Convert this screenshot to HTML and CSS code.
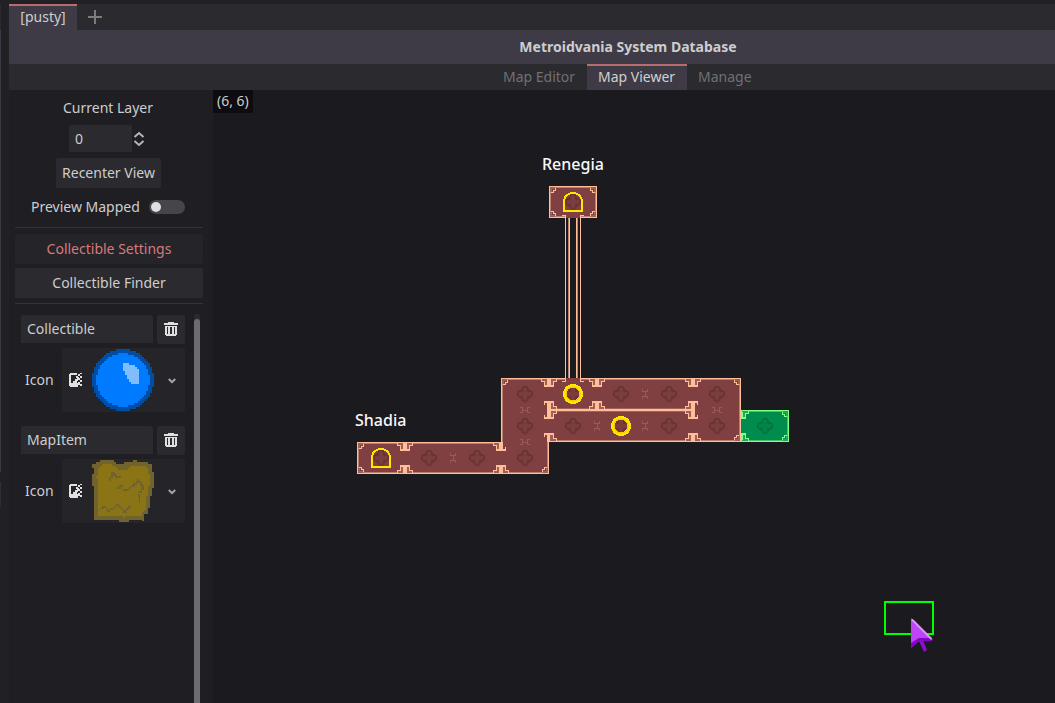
FILE: index.html
```html
<!DOCTYPE html>
<html lang="en">
<head>
<meta charset="utf-8">
<title>Metroidvania System Database</title>
<link rel="stylesheet" href="styles.css">
</head>
<body>
<div class="edge"><i class="edge-tab"></i><i class="edge-line"></i><i class="edge-line low"></i></div>
<div class="app">
  <div class="scene-tabs">
    <div class="scene-tab">[pusty]</div>
    <svg class="plus" width="14" height="14" viewBox="0 0 14 14"><path d="M7 0V14M0 7H14"/></svg>
  </div>
  <header class="title">Metroidvania System Database</header>
  <nav class="tabs">
    <span class="tab">Map Editor</span><span class="tab active">Map Viewer</span><span class="tab">Manage</span>
  </nav>
  <div class="main">
    <aside class="side">
      <div class="layer-label">Current Layer</div>
      <div class="spin"><div class="field number">0</div>
        <svg width="12" height="16" viewBox="0 0 12 16"><path d="M1.500 6L6 2L10.500 6M1.500 10L6 14L10.500 10"/></svg>
      </div>
      <div class="btn recenter">Recenter View</div>
      <div class="preview"><span>Preview Mapped</span><span class="toggle"></span></div>
      <div class="rule"></div>
      <div class="btn pressed">Collectible Settings</div>
      <div class="btn finder">Collectible Finder</div>
      <div class="rule"></div>
      <div class="scroll">
        <div class="items">
          <div class="item">
            <div class="row"><div class="field">Collectible</div>
              <div class="btn trash"><svg width="14" height="14" viewBox="0 0 14 14"><use href="#trash"/></svg></div></div>
            <div class="row"><span class="icon-label">Icon</span>
              <div class="picker">
                <svg class="img" width="13" height="14" viewBox="0 0 13 14"><use href="#image"/></svg>
                <svg width="62" height="62" viewBox="0 0 31 31" shape-rendering="crispEdges">
                  <path fill="#004da6" d="M12 0H19V1H22V2H24V3H25V4H26V5H27V6H28V7H29V9H30V12H31V19H30V22H29V24H28V25H27V26H26V27H25V28H24V29H22V30H19V31H12V30H9V29H7V28H6V27H5V26H4V25H3V24H2V22H1V19H0V12H1V9H2V7H3V6H4V5H5V4H6V3H7V2H9V1H12Z"/>
                  <path fill="#007bff" d="M13 2H18V3H21V4H23V5H24V6H25V7H26V8H27V10H28V13H29V18H28V21H27V23H26V24H25V25H24V26H23V27H21V28H18V29H13V28H10V27H8V26H7V25H6V24H5V23H4V21H3V18H2V13H3V10H4V8H5V7H6V6H7V5H8V4H10V3H13Z"/>
                  <path fill="#80bdff" d="M15.500 7H18.500V8H21.500V9H22.500V10H23.500V17.500H19.500V16.500H18.500V15H17.500V13H16.500V11H15.500Z"/>
                </svg>
                <svg class="chev" width="8" height="6" viewBox="0 0 8 6"><path d="M.8 1L4 4.200L7.200 1"/></svg>
              </div></div>
          </div>
          <div class="item">
            <div class="row"><div class="field">MapItem</div>
              <div class="btn trash"><svg width="14" height="14" viewBox="0 0 14 14"><use href="#trash"/></svg></div></div>
            <div class="row"><span class="icon-label">Icon</span>
              <div class="picker">
                <svg class="img" width="13" height="14" viewBox="0 0 13 14"><use href="#image"/></svg>
                <svg width="62" height="62" viewBox="21 15 186 186" shape-rendering="crispEdges">
                  <path fill="#70632e" d="M45 15H87V21H93V27H117V21H144V15H156V21H189V27H201V51H207V99H201V123H195V159H189V177H177V199H171V195H132V201H102V195H27V93H21V57H27V39H21V27H33V21H45Z"/>
                  <path fill="#8b7415" d="M51 27H81V33H93V39H99V45H129V39H135V33H183V39H189V57H195V93H189V123H183V165H177V171H171V183H120V189H114V183H39V69H33V63H39V39H45V33H51Z"/>
                  <path fill="#70632e" d="M78 51H90V57H96V63H108V69H90V63H84V69H78ZM72 66H78V78H72ZM102 90H114V96H108V102H96V96H102ZM114 102H132V108H114ZM132 96H138V102H132ZM138 90H150V96H138ZM144 84H156V90H144ZM153 78H159V84H153ZM156 72H162V78H168V84H174V90H177V105H171V114H159V108H168V93H165V84H159V78H156ZM159 117H165V144H162V126H159ZM45 159H51V153H63V159H69V165H63V159H57V162H45ZM66 165H75V171H66ZM75 159H87V165H75ZM87 153H93V147H102V153H108V159H99V153H93V159H87ZM108 159H114V165H108ZM114 165H126V174H114ZM123 159H132V165H123ZM129 153H138V159H129Z"/>
                </svg>
                <svg class="chev" width="8" height="6" viewBox="0 0 8 6"><path d="M.8 1L4 4.200L7.200 1"/></svg>
              </div></div>
          </div>
        </div>
        <div class="track"><div class="grabber"></div></div>
      </div>
    </aside>
    <main class="map">
      <svg width="842" height="613" viewBox="213 90 842 613">
        <defs>
          <g id="trash" fill="#e0e0e0" shape-rendering="crispEdges"><path d="M4 0H10V1H14V3H0V1H4Z"/><path fill-rule="evenodd" d="M1 4H13V13H12V14H2V13H1ZM3 5V12H4V5ZM6 5V12H8V5ZM10 5V12H11V5Z"/></g>
          <g id="image" fill="#e0e0e0" shape-rendering="crispEdges"><path fill-rule="evenodd" d="M1 0H8V2H2V10H4V8H6V6H8V4H10V6H9V8H8V10H11V12H9V14H1V13H0V1H1Z"/><path d="M9 1h2v2h-2zM11 3h2v2h-2zM11 0h2v1h-2zM7 3h2v2h-2zM9 5h2v2h-2zM11 7h2v2h-2zM9 9h2v2h-2zM11 11h2v2h-2z"/></g>
          <g id="corner"><path class="shade" d="M1 1H6V3H3V6H1Z"/><path class="ink" d="M6.500 2V4.500H4.500V6.500H2"/></g>
          <g id="stair"><path class="shade" d="M1 1H7V3H4V7H1Z"/><path class="ink" d="M7.500 1V3.500H4.500V7"/><path class="solid" d="M0 7H5V9H0Z"/></g>
          <path id="stem" class="solid" d="M-2 1H2V9H-2Z"/>
          <path id="foot" class="solid" d="M2 7H4V5H5V9H2Z"/>
          <g id="jamb"><use href="#stair"/><use href="#stair" transform="scale(-1 1)"/><use href="#stem"/></g>
          <path id="flower" class="flower" shape-rendering="auto" d="M-2.500 -2.500A3.100 3.100 0 1 1 2.500 -2.500A3.100 3.100 0 1 1 2.500 2.500A3.100 3.100 0 1 1 -2.500 2.500A3.100 3.100 0 1 1 -2.500 -2.500Z"/>
          <path id="link" class="link" d="M-5 -2.500H-2.500V2.500H-5M5 -2.500H2.500V2.500H5M-2.500 0H2.500"/>
          <g id="ring"><circle r="8.250" fill="none" stroke="#ffc800" stroke-width="3.800"/><circle r="8.900" fill="none" stroke="#ffe600" stroke-width="2.400"/></g>
          <path id="arch" fill="none" stroke="#ffe600" stroke-width="2" d="M-9 9V-1Q-8 -8.600 0 -9Q8 -8.600 9 -1V9Z"/>
        </defs>
        <g shape-rendering="crispEdges">
          <path class="room" d="M549 186H597V218H549ZM501 378H741V442H549V474H357V442H501Z"/>
          <path class="inner" d="M550.500 187.500H595.500V216.500H550.500ZM502.500 379.500H739.500V440.500H547.500V472.500H358.500V443.500H502.500Z"/>
          <path class="outline" d="M549.500 186.500H596.500V217.500H549.500ZM501.500 378.500H740.500V441.500H548.500V473.500H357.500V442.500H501.500Z"/>
          <path class="room" d="M500 451H504V465H500Z"/>
          <path class="shade" d="M549 408H693V412H549Z"/><path class="solid" d="M549 409H693V411H549Z"/>
          <path class="room" d="M566 215H580V218H566ZM566 378H580V382H566Z"/>
          <path class="ink" d="M562 215.500H565.500V381.500H562M584 215.500H580.500V381.500H584M569.500 218V378M576.500 218V378"/>
          <path class="inner" d="M568.500 218V378M577.500 218V378"/>
          <use href="#corner" x="501" y="378"/><use href="#corner" transform="translate(741 378) scale(-1 1)"/>
          <use href="#corner" transform="translate(741 442) scale(-1 -1)"/><use href="#corner" transform="translate(549 474) scale(-1 -1)"/>
          <use href="#corner" x="357" y="442"/><use href="#corner" transform="translate(357 474) scale(1 -1)"/>
          <use href="#corner" x="549" y="186"/><use href="#corner" transform="translate(597 186) scale(-1 1)"/>
          <use href="#corner" transform="translate(549 218) scale(1 -1)"/><use href="#corner" transform="translate(597 218) scale(-1 -1)"/>
          <use href="#jamb" x="549" y="378"/><use href="#jamb" x="597" y="378"/><use href="#jamb" x="693" y="378"/><use href="#jamb" x="405" y="442"/>
          <use href="#jamb" transform="translate(405 474) scale(1 -1)"/><use href="#jamb" transform="translate(501 474) scale(1 -1)"/><use href="#jamb" transform="translate(693 442) scale(1 -1)"/><use href="#jamb" transform="translate(597 410) scale(1 -1)"/>
          <g transform="translate(549 410)"><use href="#stair"/><use href="#stair" transform="scale(1 -1)"/><path class="solid" d="M-2 -9H2V9H-2Z"/><use href="#foot" transform="scale(-1 1)"/><use href="#foot" transform="scale(-1 -1)"/></g>
          <g transform="translate(693 410) scale(-1 1)"><use href="#stair"/><use href="#stair" transform="scale(1 -1)"/><path class="solid" d="M-2 -9H2V9H-2Z"/><use href="#foot" transform="scale(-1 1)"/><use href="#foot" transform="scale(-1 -1)"/></g>
          <g transform="translate(549 442) scale(1 -1)"><use href="#stair"/><path class="solid" d="M-2 0H1V9H-2Z"/><use href="#foot" transform="scale(-1 1)"/></g>
          <g transform="translate(501 442)"><use href="#stair" transform="scale(-1 1)"/><path class="solid" d="M-2 0H2V9H-2Z"/><use href="#foot"/></g>
          <g class="green"><path class="room" d="M741 410H789V442H741Z"/><path class="inner" d="M742.500 411.500H787.500V440.500H742.500Z"/><path class="outline" d="M741.500 410.500H788.500V441.500H741.500Z"/><path class="room" d="M741 419H743V433H741Z"/>
            <use href="#corner" transform="translate(789 410) scale(-1 1)"/><use href="#corner" transform="translate(789 442) scale(-1 -1)"/>
            <use href="#stair" x="741" y="410"/><use href="#stair" transform="translate(741 442) scale(1 -1)"/><path class="solid" d="M741 412H743V418H741ZM741 434H743V440H741Z"/><use href="#flower" x="765" y="426"/></g>
          <use href="#flower" x="525" y="394"/><use href="#flower" x="525" y="426"/><use href="#flower" x="525" y="458"/><use href="#flower" x="573" y="426"/><use href="#flower" x="621" y="394"/><use href="#flower" x="669" y="394"/><use href="#flower" x="669" y="426"/><use href="#flower" x="717" y="394"/><use href="#flower" x="717" y="426"/><use href="#flower" x="429" y="458"/><use href="#flower" x="477" y="458"/><use href="#flower" x="381" y="458"/><use href="#flower" x="573" y="202"/><use href="#flower" x="573" y="394"/><use href="#flower" x="621" y="426"/>
          <use href="#link" x="525" y="410"/><use href="#link" x="525" y="442"/><use href="#link" x="717" y="410"/>
          <use href="#link" transform="translate(645 394) rotate(90)"/><use href="#link" transform="translate(597 426) rotate(90)"/><use href="#link" transform="translate(645 426) rotate(90)"/><use href="#link" transform="translate(453 458) rotate(90)"/>
          <use href="#ring" x="573" y="394"/><use href="#ring" x="621" y="426"/><use href="#arch" x="381" y="458"/><use href="#arch" x="573" y="202"/>
          <path fill="none" stroke="#00ff00" stroke-width="2" d="M885 602H933V634H885Z"/>
        </g>
        <g>
          <path fill="#bd45f7" d="M911 618L933 640L920 640L911 648Z"/>
          <path fill="#8105c6" d="M911 648V643L919 638H930L933 641L921 641.500L918 642Z"/>
          <path fill="#8b0dd0" d="M919 641L923 640L927 650L924 652Z"/>
          <path fill="none" stroke="#dc94fb" stroke-width="2" d="M912 619.500L931.500 639"/>
        </g>
        <text x="542" y="170">Renegia</text><text x="355" y="426">Shadia</text>
      </svg>
      <div class="coords">(6, 6)</div>
    </main>
  </div>
</div>
</body>
</html>
```
FILE: styles.css
```css
* { box-sizing: border-box; }
body { margin: 0; width: 1055px; height: 703px; overflow: hidden; display: flex; background: #212025; color: #cdcdce; font: 14px/20px "Noto Sans", sans-serif; }
svg { display: block; flex: none; }
.edge { width: 9px; display: flex; flex-direction: column; }
.edge i { width: 1px; background: #3a3842; }
.edge .edge-tab { height: 26px; margin-top: 4px; background: #2b2a2f; }
.edge .edge-line { height: 442px; }
.edge .low { height: 25px; margin-top: 10px; background: #302f36; }
.app { flex: 1; padding-top: 4px; display: flex; flex-direction: column; }
.scene-tabs { height: 26px; background: #2b2a2f; display: flex; align-items: center; gap: 11px; }
.scene-tab { width: 68px; height: 26px; background: #3e3b46; border-top: 2px solid #b76d70; text-align: center; line-height: 21px; }
.plus { fill: none; stroke: #7b7a7d; stroke-width: 2; }
.title { height: 34px; background: #3e3b46; text-align: center; font-weight: 700; line-height: 34px; padding-left: 192px; }
.tabs { height: 26px; background: #2b2a2f; display: flex; padding-left: 483px; }
.tab { padding: 0 11px; border-top: 2px solid transparent; line-height: 21px; color: #717074; white-space: nowrap; }
.tab:first-child { width: 95px; }
.tab.active { width: 100px; background: #3e3b46; border-color: #b76d70; color: #d0d0d1; }
.main { flex: 1; display: flex; }
.side { width: 204px; height: 613px; padding: 8px 10px 0 6px; background: #1f1e23; display: flex; flex-direction: column; }
.layer-label { height: 20px; text-align: center; padding-right: 2px; }
.spin { display: flex; align-items: center; gap: 1px; margin: 7px 0 0 54px; height: 27px; }
.spin svg, .chev { fill: none; stroke: #b5b5b7; stroke-width: 2; }
.field { height: 28px; line-height: 27px; padding-left: 6px; background: #2b2a2f; border-radius: 2px 2px 0 0; flex: 1; }
.number { flex: none; width: 63px; height: 27px; }
.btn { background: #2b2a2f; border-radius: 2px; text-align: center; height: 30px; line-height: 29px; }
.recenter { width: 105px; margin: 6px 0 0 41px; }
.preview { display: flex; align-items: center; gap: 9px; margin: 9px 0 10px 16px; height: 20px; }
.toggle { width: 36px; height: 14px; border-radius: 7px; background: #46454a; padding: 2px; }
.toggle::before { content: ""; display: block; width: 10px; height: 10px; border-radius: 50%; background: #e0e0e0; }
.rule { height: 1px; background: #34333a; }
.pressed { background: #252429; color: #d7797c; margin-top: 6px; }
.finder { margin: 4px 0 5px; }
.scroll { display: flex; margin-top: 11px; flex: 1; min-height: 0; }
.items { width: 170px; padding-left: 6px; display: flex; flex-direction: column; gap: 14px; }
.item { height: 97px; }
.row { display: flex; gap: 4px; height: 29px; margin-bottom: 4px; }
.row + .row { height: 64px; align-items: center; justify-content: space-between; padding-left: 4px; }
.trash { width: 28px; height: 29px; padding: 7px 7px 0; }
.picker { width: 123px; height: 64px; background: #252429; border-radius: 2px; display: flex; align-items: center; padding-left: 7px; }
.img { margin-right: 10px; }
.chev { margin: 2px 0 0 14px; stroke: #a5a5a7; }
.track { width: 6px; margin: -1px 0 0 9px; padding-top: 5px; background: #2b2a2f; border-radius: 3px 3px 0 0; }
.grabber { height: 100%; background: #6c6b6f; border-radius: 3px 3px 0 0; }
.map { flex: 1; position: relative; background: #1b1a1f; }
.coords { position: absolute; left: 0; top: 0; width: 40px; height: 23px; padding-left: 4px; line-height: 22px; background: #0d0c10; }
.map text { font-size: 16px; font-weight: 500; fill: #f8f8f8; }
.green { --ink: #83ff83; --room: #008c4d; --inner: #49c369; --shade: #24a75a; --flower: #008449; --petal: #006f40; }
.room { fill: var(--room, #803f40); }
.inner { fill: none; stroke: var(--inner, #bd7f69); }
.outline, .ink { fill: none; stroke: var(--ink, #ffbe98); }
.solid { fill: var(--ink, #ffbe98); }
.shade { fill: var(--shade, #9f605a); }
.flower { fill: var(--flower, #7a3c3d); stroke: var(--petal, #643234); stroke-width: 1.3; }
.link { fill: none; stroke: #97595b; }
```
